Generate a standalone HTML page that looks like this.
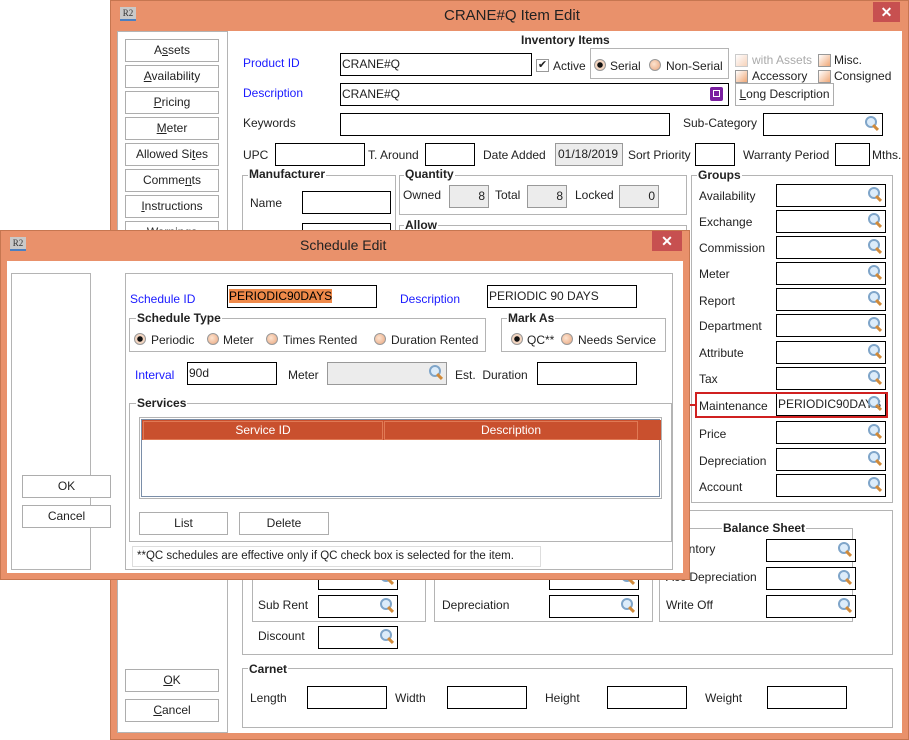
<!DOCTYPE html>
<html><head><meta charset="utf-8"><style>
*{box-sizing:border-box;margin:0;padding:0}
body{width:909px;height:740px;position:relative;overflow:hidden;background:#fff;font-family:"Liberation Sans",sans-serif;font-size:12px;color:#222}
.a{position:absolute}
.l{position:absolute;white-space:nowrap;line-height:14px}
.bl{color:#1a1aff}
.i{position:absolute;border:1px solid #000;background:#fff;height:23px;line-height:21px;padding-left:1px;white-space:nowrap;overflow:hidden}
.gr{background:#ececec;border-color:#999;text-align:right;padding-right:3px}
.g{position:absolute;border:1px solid #b4b4b4}
.gl{position:absolute;background:#fff;font-weight:bold;padding:0 1px;line-height:13px;white-space:nowrap}
.b{position:absolute;border:1px solid #adadad;background:#fff;text-align:center;line-height:20px;height:23px;white-space:nowrap}
.m{position:absolute;right:3px;top:2px;width:14px;height:16px}
.m:before{content:"";position:absolute;left:0;top:0;width:8px;height:8px;border:2px solid #7fa5c9;border-radius:50%;background:#dcecfa}
.m:after{content:"";position:absolute;left:9px;top:8px;width:3px;height:7px;background:#d08a3a;transform:rotate(-45deg)}
.r{position:absolute;width:12px;height:12px;border-radius:50%;border:1px solid #999;background:radial-gradient(circle at 40% 40%,#fde3cf,#e9a57d)}
.r.on{background:radial-gradient(circle,#111 0 2.5px,#f3d5c0 3px)}
.c{position:absolute;width:13px;height:13px;border:1px solid #999;background:linear-gradient(135deg,#fff,#f0a878)}
.win{position:absolute;background:#e9916b;border:1px solid #c67650}
.t{position:absolute;font-size:15px;color:#222;white-space:nowrap}
.x{position:absolute;background:#c75050;color:#fff;text-align:center;font-size:14px;line-height:20px;font-weight:bold}
.ic{position:absolute;width:16px;height:14px;background:#c9c9c9;border-bottom:2px solid #4a7fc1;font:9px "Liberation Serif",serif;color:#333;line-height:12px;text-align:center}
u{text-decoration:underline}
</style></head><body>

<!-- MAIN WINDOW -->
<div class="win" style="left:110px;top:0;width:799px;height:740px"></div>
<div class="ic" style="left:120px;top:7px">R2</div>
<div class="t" style="left:444px;top:7px">CRANE#Q Item Edit</div>
<div class="x" style="left:873px;top:2px;width:27px;height:20px">✕</div>
<div class="a" style="left:117px;top:31px;width:785px;height:702px;background:#fff"></div>
<div class="g" style="left:117px;top:31px;width:111px;height:702px"></div>

<div class="b" style="left:125px;top:39px;width:94px">A<u>s</u>sets</div>
<div class="b" style="left:125px;top:65px;width:94px"><u>A</u>vailability</div>
<div class="b" style="left:125px;top:91px;width:94px"><u>P</u>ricing</div>
<div class="b" style="left:125px;top:117px;width:94px"><u>M</u>eter</div>
<div class="b" style="left:125px;top:143px;width:94px">Allowed Si<u>t</u>es</div>
<div class="b" style="left:125px;top:169px;width:94px">Comme<u>n</u>ts</div>
<div class="b" style="left:125px;top:195px;width:94px"><u>I</u>nstructions</div>
<div class="b" style="left:125px;top:221px;width:94px">Warnings</div>
<div class="b" style="left:125px;top:669px;width:94px"><u>O</u>K</div>
<div class="b" style="left:125px;top:699px;width:94px"><u>C</u>ancel</div>

<div class="l" style="left:521px;top:33px;font-weight:bold">Inventory Items</div>
<div class="l bl" style="left:243px;top:56px">Product ID</div>
<div class="i" style="left:340px;top:53px;width:192px">CRANE#Q</div>
<div class="c" style="left:536px;top:59px;background:#fff;font-size:11px;line-height:11px;text-align:center">✔</div>
<div class="l" style="left:553px;top:59px">Active</div>
<div class="g" style="left:590px;top:48px;width:139px;height:31px"></div>
<div class="r on" style="left:594px;top:59px"></div><div class="l" style="left:610px;top:59px">Serial</div>
<div class="r" style="left:649px;top:59px"></div><div class="l" style="left:666px;top:59px">Non-Serial</div>
<div class="c" style="left:735px;top:54px;opacity:.5"></div><div class="l" style="left:752px;top:53px;color:#aaa">with Assets</div>
<div class="c" style="left:818px;top:54px"></div><div class="l" style="left:834px;top:53px">Misc.</div>
<div class="c" style="left:735px;top:70px"></div><div class="l" style="left:752px;top:69px">Accessory</div>
<div class="c" style="left:818px;top:70px"></div><div class="l" style="left:834px;top:69px">Consigned</div>

<div class="l bl" style="left:243px;top:86px">Description</div>
<div class="i" style="left:340px;top:83px;width:389px">CRANE#Q</div>
<div class="a" style="left:710px;top:87px;width:13px;height:14px;background:#7a1fa0;border-radius:2px"><div class="a" style="left:3px;top:3px;width:7px;height:7px;border:1.5px solid #fff"></div></div>
<div class="b" style="left:735px;top:83px;width:99px;line-height:21px"><u>L</u>ong Description</div>

<div class="l" style="left:243px;top:116px">Keywords</div>
<div class="i" style="left:340px;top:113px;width:330px"></div>
<div class="l" style="left:683px;top:116px">Sub-Category</div>
<div class="i" style="left:763px;top:113px;width:120px"><span class="m"></span></div>

<div class="l" style="left:243px;top:148px">UPC</div>
<div class="i" style="left:275px;top:143px;width:90px"></div>
<div class="l" style="left:368px;top:148px">T. Around</div>
<div class="i" style="left:425px;top:143px;width:50px"></div>
<div class="l" style="left:483px;top:148px">Date Added</div>
<div class="i gr" style="left:555px;top:143px;width:68px;text-align:left;padding-left:2px">01/18/2019</div>
<div class="l" style="left:628px;top:148px">Sort Priority</div>
<div class="i" style="left:695px;top:143px;width:40px"></div>
<div class="l" style="left:743px;top:148px">Warranty Period</div>
<div class="i" style="left:835px;top:143px;width:35px"></div>
<div class="l" style="left:872px;top:148px">Mths.</div>

<div class="g" style="left:242px;top:175px;width:154px;height:330px"></div>
<div class="gl" style="left:248px;top:168px">Manufacturer</div>
<div class="l" style="left:250px;top:196px">Name</div>
<div class="i" style="left:302px;top:191px;width:89px"></div>
<div class="i" style="left:302px;top:223px;width:89px"></div>

<div class="g" style="left:399px;top:175px;width:288px;height:40px"></div>
<div class="gl" style="left:404px;top:168px">Quantity</div>
<div class="l" style="left:403px;top:188px">Owned</div>
<div class="i gr" style="left:449px;top:185px;width:40px">8</div>
<div class="l" style="left:495px;top:188px">Total</div>
<div class="i gr" style="left:527px;top:185px;width:40px">8</div>
<div class="l" style="left:575px;top:188px">Locked</div>
<div class="i gr" style="left:619px;top:185px;width:40px">0</div>
<div class="g" style="left:399px;top:225px;width:288px;height:40px"></div>
<div class="gl" style="left:404px;top:219px">Allow</div>

<div class="g" style="left:691px;top:175px;width:202px;height:328px"></div>
<div class="gl" style="left:697px;top:169px">Groups</div>
<div class="l" style="left:699px;top:189px">Availability</div><div class="i" style="left:776px;top:184px;width:110px"><span class="m"></span></div>
<div class="l" style="left:699px;top:215px">Exchange</div><div class="i" style="left:776px;top:210px;width:110px"><span class="m"></span></div>
<div class="l" style="left:699px;top:241px">Commission</div><div class="i" style="left:776px;top:236px;width:110px"><span class="m"></span></div>
<div class="l" style="left:699px;top:267px">Meter</div><div class="i" style="left:776px;top:262px;width:110px"><span class="m"></span></div>
<div class="l" style="left:699px;top:294px">Report</div><div class="i" style="left:776px;top:288px;width:110px"><span class="m"></span></div>
<div class="l" style="left:699px;top:319px">Department</div><div class="i" style="left:776px;top:314px;width:110px"><span class="m"></span></div>
<div class="l" style="left:699px;top:346px">Attribute</div><div class="i" style="left:776px;top:341px;width:110px"><span class="m"></span></div>
<div class="l" style="left:699px;top:372px">Tax</div><div class="i" style="left:776px;top:367px;width:110px"><span class="m"></span></div>
<div class="l" style="left:699px;top:399px">Maintenance</div><div class="i" style="left:776px;top:393px;width:110px">PERIODIC90DAYS<span class="m"></span></div>
<div class="a" style="left:695px;top:392px;width:193px;height:26px;border:2px solid #d02020"></div>
<div class="a" style="left:668px;top:404px;width:27px;height:2px;background:#d02020"></div>
<div class="a" style="left:663px;top:401px;width:0;height:0;border-top:4px solid transparent;border-bottom:4px solid transparent;border-right:7px solid #d02020"></div>
<div class="l" style="left:699px;top:427px">Price</div><div class="i" style="left:776px;top:421px;width:110px"><span class="m"></span></div>
<div class="l" style="left:699px;top:454px">Depreciation</div><div class="i" style="left:776px;top:448px;width:110px"><span class="m"></span></div>
<div class="l" style="left:699px;top:480px">Account</div><div class="i" style="left:776px;top:474px;width:110px"><span class="m"></span></div>

<div class="g" style="left:242px;top:510px;width:651px;height:145px"></div>
<div class="g" style="left:252px;top:528px;width:174px;height:94px"></div>
<div class="g" style="left:434px;top:528px;width:219px;height:94px"></div>
<div class="g" style="left:659px;top:528px;width:194px;height:94px"></div>
<div class="gl" style="left:722px;top:522px">Balance Sheet</div>
<div class="l" style="left:666px;top:542px">Inventory</div><div class="i" style="left:766px;top:539px;width:90px"><span class="m"></span></div>
<div class="l" style="left:666px;top:570px">Acc Depreciation</div><div class="i" style="left:766px;top:567px;width:90px"><span class="m"></span></div>
<div class="l" style="left:666px;top:598px">Write Off</div><div class="i" style="left:766px;top:595px;width:90px"><span class="m"></span></div>
<div class="i" style="left:318px;top:567px;width:80px"><span class="m"></span></div>
<div class="l" style="left:258px;top:598px">Sub Rent</div><div class="i" style="left:318px;top:595px;width:80px"><span class="m"></span></div>
<div class="i" style="left:549px;top:567px;width:90px"><span class="m"></span></div>
<div class="l" style="left:442px;top:598px">Depreciation</div><div class="i" style="left:549px;top:595px;width:90px"><span class="m"></span></div>
<div class="l" style="left:258px;top:629px">Discount</div><div class="i" style="left:318px;top:626px;width:80px"><span class="m"></span></div>

<div class="g" style="left:242px;top:668px;width:651px;height:60px"></div>
<div class="gl" style="left:248px;top:663px">Carnet</div>
<div class="l" style="left:250px;top:691px">Length</div><div class="i" style="left:307px;top:686px;width:80px"></div>
<div class="l" style="left:395px;top:691px">Width</div><div class="i" style="left:447px;top:686px;width:80px"></div>
<div class="l" style="left:545px;top:691px">Height</div><div class="i" style="left:607px;top:686px;width:80px"></div>
<div class="l" style="left:705px;top:691px">Weight</div><div class="i" style="left:767px;top:686px;width:80px"></div>

<!-- SCHEDULE DIALOG -->
<div class="win" style="left:0;top:230px;width:690px;height:350px"></div>
<div class="ic" style="left:10px;top:237px">R2</div>
<div class="t" style="left:300px;top:237px;font-size:14px">Schedule Edit</div>
<div class="x" style="left:652px;top:231px;width:30px;height:20px">✕</div>
<div class="a" style="left:7px;top:261px;width:676px;height:312px;background:#fff"></div>
<div class="g" style="left:11px;top:273px;width:80px;height:297px"></div>
<div class="g" style="left:125px;top:273px;width:548px;height:297px"></div>
<div class="g" style="left:129px;top:273px;width:544px;height:38px;border:none"></div>
<div class="b" style="left:22px;top:475px;width:89px">OK</div>
<div class="b" style="left:22px;top:505px;width:89px">Cancel</div>

<div class="l bl" style="left:130px;top:292px">Schedule ID</div>
<div class="i" style="left:227px;top:285px;width:150px"><span style="background:#f08a4a;color:#000">PERIODIC90DAYS</span></div>
<div class="l bl" style="left:400px;top:292px">Description</div>
<div class="i" style="left:487px;top:285px;width:150px">PERIODIC 90 DAYS</div>

<div class="g" style="left:129px;top:318px;width:357px;height:34px"></div>
<div class="gl" style="left:136px;top:312px">Schedule Type</div>
<div class="r on" style="left:134px;top:333px"></div><div class="l" style="left:151px;top:333px">Periodic</div>
<div class="r" style="left:207px;top:333px"></div><div class="l" style="left:223px;top:333px">Meter</div>
<div class="r" style="left:266px;top:333px"></div><div class="l" style="left:283px;top:333px">Times Rented</div>
<div class="r" style="left:374px;top:333px"></div><div class="l" style="left:391px;top:333px">Duration Rented</div>
<div class="g" style="left:501px;top:318px;width:165px;height:34px"></div>
<div class="gl" style="left:507px;top:312px">Mark As</div>
<div class="r on" style="left:511px;top:333px"></div><div class="l" style="left:527px;top:333px">QC**</div>
<div class="r" style="left:561px;top:333px"></div><div class="l" style="left:578px;top:333px">Needs Service</div>

<div class="l bl" style="left:135px;top:368px">Interval</div>
<div class="i" style="left:187px;top:362px;width:90px">90d</div>
<div class="l" style="left:288px;top:368px">Meter</div>
<div class="i" style="left:327px;top:362px;width:120px;background:#ececec;border-color:#999"><span class="m"></span></div>
<div class="l" style="left:455px;top:368px">Est.&nbsp; Duration</div>
<div class="i" style="left:537px;top:362px;width:100px"></div>

<div class="g" style="left:129px;top:403px;width:543px;height:139px"></div>
<div class="gl" style="left:136px;top:397px">Services</div>
<div class="a" style="left:139px;top:417px;width:523px;height:82px;border:1px solid #b4b4b4;padding:1px"><div style="border:1px solid #7a8ea8;height:78px;position:relative">
<div class="a" style="left:0;top:0;width:519px;height:20px;background:#c9502e"></div>
<div class="a" style="left:1px;top:1px;width:240px;height:19px;border:1px solid #e07a55;color:#fff;text-align:center;line-height:17px">Service ID</div>
<div class="a" style="left:242px;top:1px;width:254px;height:19px;border:1px solid #e07a55;color:#fff;text-align:center;line-height:17px">Description</div>
</div></div>
<div class="b" style="left:139px;top:512px;width:89px">List</div>
<div class="b" style="left:239px;top:512px;width:90px">Delete</div>
<div class="a" style="left:132px;top:546px;width:409px;height:21px;border:1px solid #ddd;line-height:19px;padding-left:4px;white-space:nowrap;font-size:11.5px">**QC schedules are effective only if QC check box is selected for the item.</div>
</body></html>
